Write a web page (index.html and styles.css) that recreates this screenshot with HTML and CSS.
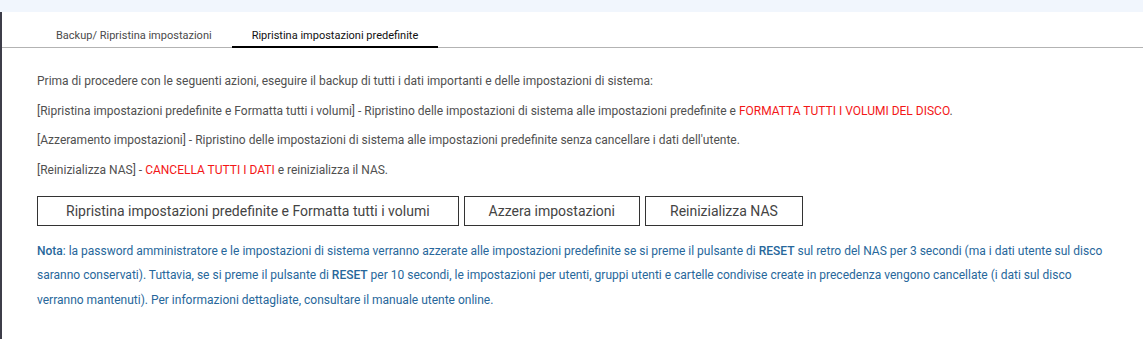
FILE: index.html
```html
<!DOCTYPE html>
<html>
  <head>
    <meta charset="utf-8">
    <link rel="stylesheet" href="styles.css">
    <title>Ripristina impostazioni predefinite</title>
  </head>
  <body>
    <div id="topbar"></div>

    <div id="main">
      <div id="edge"></div>
      <div id="content">
        <div class="tabs">
          <div class="tab">Backup/ Ripristina impostazioni</div>
          <div class="tab active">Ripristina impostazioni predefinite</div>
        </div>

        <div class="panel">
          <p>Prima di procedere con le seguenti azioni, eseguire il backup di tutti i dati importanti e delle impostazioni di sistema:</p>
          <p>[Ripristina impostazioni predefinite e Formatta tutti i volumi] - Ripristino delle impostazioni di sistema alle impostazioni predefinite e <span class="warn">FORMATTA TUTTI I VOLUMI DEL DISCO</span>.</p>
          <p>[Azzeramento impostazioni] - Ripristino delle impostazioni di sistema alle impostazioni predefinite senza cancellare i dati dell'utente.</p>
          <p>[Reinizializza NAS] - <span class="warn">CANCELLA TUTTI I DATI</span> e reinizializza il NAS.</p>

          <div class="actions">
            <button type="button" class="wide">Ripristina impostazioni predefinite e Formatta tutti i volumi</button>
            <button type="button">Azzera impostazioni</button>
            <button type="button">Reinizializza NAS</button>
          </div>

          <div class="note">
            <b>Nota</b>: la password amministratore e le impostazioni di sistema verranno azzerate alle impostazioni predefinite se si preme il pulsante di <b>RESET</b> sul retro del NAS per 3 secondi (ma i dati utente sul disco saranno conservati). Tuttavia, se si preme il pulsante di <b>RESET</b> per 10 secondi, le impostazioni per utenti, gruppi utenti e cartelle condivise create in precedenza vengono cancellate (i dati sul disco verranno mantenuti). Per informazioni dettagliate, consultare il manuale utente online.
          </div>
        </div>
      </div>
    </div>
  </body>
</html>
```

FILE: styles.css
```css
* {
  box-sizing: border-box;
}
html, body {
  height: 100%;
}
body {
  margin: 0;
  font-family: Roboto, "Liberation Sans", sans-serif;
  font-size: 12px;
  color: #505050;
  background-color: #fff;
  display: flex;
  flex-direction: column;
}
#topbar {
  height: 12px;
  background-color: #f1f6fd;
}
#main {
  flex: 1;
  display: flex;
}
#edge {
  width: 2px;
  background-color: #3d3d49;
}
#content {
  flex: 1;
}
.tabs {
  height: 36px;
  display: flex;
  align-items: flex-end;
  gap: 2px;
  padding-left: 36px;
  border-bottom: 1px solid #b3b3b3;
}
.tab {
  padding: 0 18px 4px;
  font-size: 11px;
  line-height: 15px;
  color: #4a4a4a;
}
.tab.active {
  padding: 0 20px 3px;
  color: #111;
  border-bottom: 2px solid #000;
  margin-bottom: -1px;
}
.panel {
  padding: 19px 28px 0 35px;
}
p {
  margin: 0;
  line-height: 29.7px;
}
.warn {
  color: #f31717;
}
.actions {
  display: flex;
  gap: 5px;
  margin-top: 10px;
}
button {
  height: 30px;
  padding: 0 24px;
  font-family: inherit;
  font-size: 14px;
  color: #444;
  background-color: #fff;
  border: 1px solid #333;
  border-radius: 0;
}
button.wide {
  padding: 0 28px;
}
.note {
  margin-top: 13px;
  line-height: 24.5px;
  color: #27679b;
}
.note b {
  font-weight: 500;
}
```
